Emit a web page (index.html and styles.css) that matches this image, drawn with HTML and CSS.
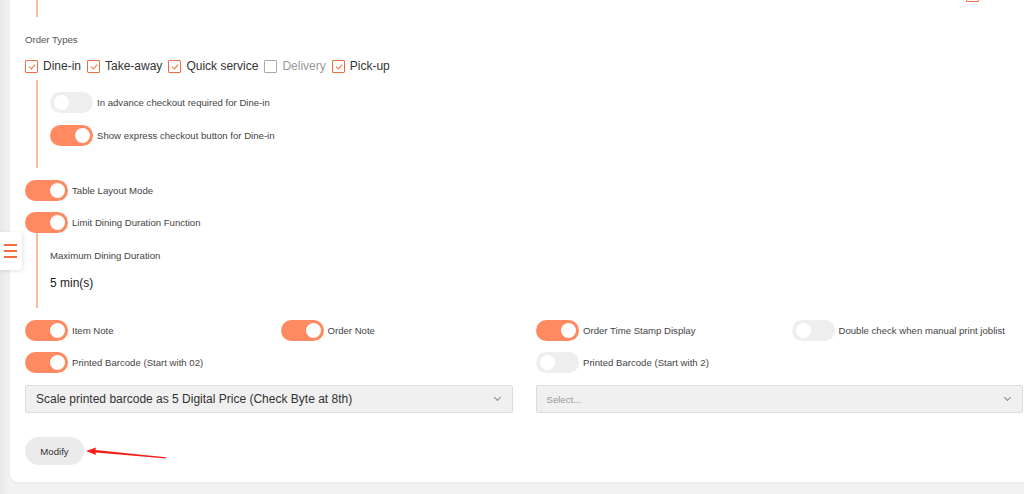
FILE: index.html
```html
<!DOCTYPE html>
<html>
<head>
<meta charset="utf-8">
<link rel="stylesheet" href="styles.css">
</head>
<body>
<div class="page">
  <div class="side-menu">
    <svg width="13" height="14" viewBox="0 0 13 14"><path d="M0 1H13M0 7H13M0 13H13" stroke="#f26d3d" stroke-width="1.8"/></svg>
  </div>
  <div class="card">
    <div class="prev">
      <div class="prev-line"></div>
      <span class="cb cb-on cb-peek"></span>
    </div>

    <div class="section-label">Order Types</div>
    <div class="types">
      <label class="type"><span class="cb cb-on"></span>Dine-in</label>
      <label class="type"><span class="cb cb-on"></span>Take-away</label>
      <label class="type"><span class="cb cb-on"></span>Quick service</label>
      <label class="type type-off"><span class="cb"></span>Delivery</label>
      <label class="type"><span class="cb cb-on"></span>Pick-up</label>
    </div>

    <div class="sub sub-dine">
      <div class="opt"><span class="tg"></span>In advance checkout required for Dine-in</div>
      <div class="opt"><span class="tg tg-on"></span>Show express checkout button for Dine-in</div>
    </div>

    <div class="opt opt-table"><span class="tg tg-on"></span>Table Layout Mode</div>
    <div class="opt opt-limit"><span class="tg tg-on"></span>Limit Dining Duration Function</div>

    <div class="sub sub-limit">
      <div class="sub-label">Maximum Dining Duration</div>
      <div class="sub-value">5 min(s)</div>
    </div>

    <div class="grid4">
      <div class="opt"><span class="tg tg-on"></span>Item Note</div>
      <div class="opt"><span class="tg tg-on"></span>Order Note</div>
      <div class="opt"><span class="tg tg-on"></span>Order Time Stamp Display</div>
      <div class="opt"><span class="tg"></span>Double check when manual print joblist</div>
      <div class="opt"><span class="tg tg-on"></span>Printed Barcode (Start with 02)</div>
      <div class="opt col3"><span class="tg"></span>Printed Barcode (Start with 2)</div>
    </div>

    <div class="grid2">
      <div class="select"><span>Scale printed barcode as 5 Digital Price (Check Byte at 8th)</span><i class="chev"></i></div>
      <div class="select select-empty"><span>Select...</span><i class="chev"></i></div>
    </div>

    <div class="actions">
      <button class="btn">Modify</button>
    </div>

    <svg class="arrow" width="90" height="16" viewBox="0 0 90 16">
      <polygon points="0,5 10,1.5 9.5,4 80,11.2 80,12.6 9.5,6.5 10,9" fill="#f4211b"/>
    </svg>
  </div>
</div>
</body>
</html>
```

FILE: styles.css
```css
* { box-sizing: border-box; }
html, body { margin: 0; padding: 0; }
body {
  background: #f2f2f2;
  font-family: "Liberation Sans", Arial, sans-serif;
  color: #333;
  width: 1024px;
  height: 494px;
  overflow: hidden;
}
.page {
  position: relative;
  display: flex;
  padding-left: 10px;
  height: 494px;
  background: linear-gradient(to right, #e9e9e9 0, #f2f2f2 10px);
}
.side-menu {
  position: absolute;
  left: 0;
  top: 232px;
  width: 22px;
  height: 38px;
  background: #fff;
  border-radius: 0 4px 4px 0;
  box-shadow: 1px 1px 4px rgba(0,0,0,0.12);
  display: flex;
  align-items: center;
  justify-content: flex-start;
  padding-left: 4px;
  z-index: 2;
}
.card {
  position: relative;
  flex: 1;
  height: 482px;
  background: #fff;
  border-radius: 0 0 0 8px;
  box-shadow: 0 1px 3px rgba(0,0,0,0.05);
  padding: 0 1px 0 15px;
}
.prev {
  height: 17px;
  display: flex;
  justify-content: space-between;
  align-items: flex-start;
}
.prev-line {
  margin-left: 11px;
  width: 2px;
  height: 17px;
  background: #f9b9a5;
}
.section-label {
  margin-top: 17px;
  font-size: 9.6px;
  line-height: 12px;
  color: #555;
}
.types {
  margin-top: 10px;
  height: 20px;
  display: flex;
  align-items: center;
}
.type {
  display: flex;
  align-items: center;
  font-size: 12px;
  color: #333;
  margin-right: 6px;
}
.type-off { color: #999; }
.cb {
  position: relative;
  display: inline-block;
  width: 13px;
  height: 13px;
  border: 1px solid #aaa;
  border-radius: 1px;
  background: #fff;
  margin-right: 5px;
  flex: none;
}
.cb-on { border-color: #f26d3d; }
.cb-on::after {
  content: "";
  position: absolute;
  left: 4px;
  top: 2px;
  width: 3px;
  height: 5px;
  border-right: 1px solid #f26d3d;
  border-bottom: 1px solid #f26d3d;
  transform: rotate(40deg);
}
.cb.cb-peek {
  margin-top: -11px;
  margin-right: 44px;
}
.sub {
  margin-left: 11px;
  border-left: 2px solid #f9b9a5;
  padding-left: 12px;
}
.sub-dine {
  margin-top: 4px;
  height: 88px;
  padding-top: 12px;
  display: flex;
  flex-direction: column;
  gap: 13px;
}
.opt {
  display: flex;
  align-items: center;
  height: 20px;
  font-size: 9.6px;
  color: #444;
  white-space: nowrap;
}
.tg {
  position: relative;
  display: inline-block;
  width: 43px;
  height: 21px;
  border-radius: 11px;
  background: #eeeeee;
  margin-right: 4px;
  flex: none;
}
.tg::after {
  content: "";
  position: absolute;
  top: 3px;
  left: 4px;
  width: 15px;
  height: 15px;
  border-radius: 50%;
  background: #fff;
}
.tg-on { background: #ff8a62; }
.tg-on::after { left: auto; right: 3px; }
.opt-table { margin-top: 12px; }
.opt-limit { margin-top: 12px; }
.sub-limit {
  margin-top: 0;
  height: 76px;
  padding-top: 18px;
}
.sub-label {
  font-size: 9.6px;
  line-height: 12px;
  color: #444;
}
.sub-value {
  margin-top: 13px;
  font-size: 12px;
  line-height: 16px;
  color: #222;
}
.grid4 {
  margin-top: 12px;
  display: grid;
  grid-template-columns: repeat(4, 1fr);
  column-gap: 24px;
  row-gap: 12px;
}
.col3 { grid-column: 3; }
.grid2 {
  margin-top: 13px;
  display: grid;
  grid-template-columns: 1fr 1fr;
  column-gap: 23px;
}
.select {
  height: 28px;
  background: #f0f0f0;
  border: 1px solid #dcdcdc;
  border-radius: 2px;
  display: flex;
  align-items: center;
  justify-content: space-between;
  padding: 0 12px 0 10px;
  font-size: 12px;
  color: #333;
}
.select-empty { font-size: 9.6px; color: #999; }
.chev {
  width: 5px;
  height: 5px;
  border-right: 1px solid #888;
  border-bottom: 1px solid #888;
  transform: rotate(45deg);
  margin-top: -3px;
}
.actions { margin-top: 24px; }
.btn {
  width: 59px;
  height: 28px;
  border: none;
  border-radius: 14px;
  background: #ebebeb;
  font-family: "Liberation Sans", Arial, sans-serif;
  font-size: 9.6px;
  color: #333;
  padding: 0;
}
.arrow {
  position: absolute;
  left: 76px;
  top: 446px;
}
```
